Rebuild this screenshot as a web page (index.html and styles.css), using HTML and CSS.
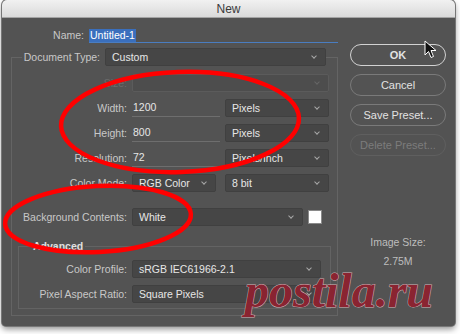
FILE: index.html
```html
<!DOCTYPE html>
<html lang="en">
<head>
<meta charset="UTF-8" />
<title>New</title>
<link rel="stylesheet" href="styles.css">
</head>
<body>
  <div class="window">
    <div class="titlebar">New</div>
    <div class="content">
      <div class="main">
        <div class="name-row">
          <span class="lbl name-lbl">Name:</span>
          <div class="name-field"><span class="selected">Untitled-1</span></div>
        </div>

        <fieldset class="group">
          <legend class="row doc-row">
            <span class="lbl doc-lbl">Document Type:</span>
            <div class="select doc-select">Custom</div>
          </legend>

          <div class="row">
            <span class="lbl off">Size:</span>
            <div class="select disabled size-select"></div>
          </div>
          <div class="row">
            <span class="lbl">Width:</span>
            <div class="textfield">1200</div>
            <div class="select unit">Pixels</div>
          </div>
          <div class="row">
            <span class="lbl">Height:</span>
            <div class="textfield">800</div>
            <div class="select unit">Pixels</div>
          </div>
          <div class="row">
            <span class="lbl">Resolution:</span>
            <div class="textfield">72</div>
            <div class="select unit">Pixels/Inch</div>
          </div>
          <div class="row">
            <span class="lbl">Color Mode:</span>
            <div class="select mode">RGB Color</div>
            <div class="select unit bits">8 bit</div>
          </div>
          <div class="row bg-row">
            <span class="lbl">Background Contents:</span>
            <div class="select bg-select">White</div>
            <div class="swatch"></div>
          </div>

          <fieldset class="advanced">
            <legend>Advanced</legend>
            <div class="row">
              <span class="lbl adv-lbl">Color Profile:</span>
              <div class="select adv-select">sRGB IEC61966-2.1</div>
            </div>
            <div class="row">
              <span class="lbl adv-lbl">Pixel Aspect Ratio:</span>
              <div class="select adv-select">Square Pixels</div>
            </div>
          </fieldset>
        </fieldset>
      </div>

      <div class="side">
        <div class="btn primary">OK</div>
        <div class="btn">Cancel</div>
        <div class="btn">Save Preset...</div>
        <div class="btn dim">Delete Preset...</div>
        <div class="image-size">
          <div class="is-label">Image Size:</div>
          <div class="is-value">2.75M</div>
        </div>
      </div>
    </div>
  </div>

  <!-- marcas rojas y marca de agua encima del dialogo -->
  <svg class="marks" width="460" height="334" viewBox="0 0 460 334">
    <ellipse cx="180" cy="122" rx="119" ry="50" transform="rotate(-2 180 122)" />
    <ellipse cx="98" cy="219" rx="93" ry="33" transform="rotate(-3 98 219)" />
  </svg>
  <div class="watermark">postila.ru</div>
  <svg class="cursor" width="14" height="20" viewBox="0 0 14 20">
    <path d="M1 1 L1 15 L4.5 11.5 L7 17.5 L9.5 16.5 L7 10.5 L12 10.5 Z" />
  </svg>
</body>
</html>
```

FILE: styles.css
```css
body {
  margin: 0;
  width: 460px;
  height: 334px;
  background: #fff;
  position: relative;
  overflow: hidden;
  font-family: "Liberation Sans", Arial, sans-serif;
  font-size: 10.5px;
}

.window {
  margin-left: 2px;
  width: 453px;
  height: 326px;
  background: #535353;
  border-radius: 5px 5px 4px 4px;
  box-shadow: 0 0 0 1px #777, 0 3px 6px rgba(0,0,0,0.45);
  overflow: hidden;
}

.titlebar {
  height: 18px;
  line-height: 18px;
  text-align: center;
  font-size: 12px;
  color: #3a3a3a;
  background: linear-gradient(#f1f1f1, #dadada);
  border-bottom: 1px solid #a4a4a4;
  box-sizing: border-box;
}

.content {
  display: flex;
}

.main {
  width: 338px;
  padding-top: 11px;
}

/* fila de nombre */
.name-row {
  display: flex;
  gap: 5px;
  margin-left: 9px;
  height: 14px;
  line-height: 13px;
}
.name-lbl {
  width: 73px;
}
.name-field {
  width: 249px;
  border-bottom: 1px solid #4a7dc0;
  box-sizing: border-box;
}
.selected {
  display: inline-block;
  background: #3a6fbd;
  color: #fff;
  padding: 0 1px;
  height: 13px;
}

.lbl {
  color: #c8c8c8;
  text-align: right;
  flex: none;
}
.lbl.off {
  color: #6c6c6c;
}

/* grupo principal */
fieldset {
  margin: 0;
  min-width: 0;
  box-sizing: border-box;
}
.group {
  margin: 5px 0 0 9px;
  width: 327px;
  padding: 8px 0 6px 0;
  border: 1px solid #646464;
}
.row {
  display: flex;
  align-items: center;
  gap: 5px;
  height: 18px;
  line-height: 18px;
  margin-bottom: 7px;
}
.row .lbl {
  width: 115px;
}
.doc-row {
  margin: 0 0 0 10px;
  padding: 0;
}
.row .doc-lbl {
  width: 78px;
}

.select {
  position: relative;
  height: 18px;
  box-sizing: border-box;
  background: #464646;
  border: 1px solid #404040;
  border-radius: 2px;
  color: #e6e6e6;
  padding-left: 6px;
  line-height: 16px;
}
.select::after {
  content: "";
  position: absolute;
  right: 9px;
  top: 5px;
  width: 3px;
  height: 3px;
  border-right: 1px solid #a8a8a8;
  border-bottom: 1px solid #a8a8a8;
  transform: rotate(45deg);
}
.select.disabled {
  background: #4d4d4d;
  border-color: #5b5b5b;
}
.select.disabled::after {
  border-color: #666;
}

.doc-select { width: 221px; }
.size-select { width: 197px; }
.unit { width: 104px; }
.mode { width: 84px; }
.bits { margin-left: 4px; }
.bg-select { width: 171px; }

.textfield {
  width: 88px;
  height: 18px;
  box-sizing: border-box;
  border-bottom: 1px solid #6e6e6e;
  color: #e6e6e6;
  padding-left: 1px;
  line-height: 17px;
}

.bg-row {
  margin-top: 16px;
  margin-bottom: 0;
}
.swatch {
  width: 14px;
  height: 14px;
  box-sizing: border-box;
  background: #fff;
  border: 1px solid #8a8a8a;
}

/* bloque avanzado */
.advanced {
  margin: 14px 0 0 6px;
  width: 313px;
  padding: 8px 0 0 0;
  border: 1px solid #636363;
}
.advanced legend {
  margin-left: 12px;
  padding: 0 2px;
  color: #e0e0e0;
  font-weight: bold;
  line-height: 12px;
}
.row .adv-lbl {
  width: 108px;
}
.adv-select { width: 189px; }
.advanced .row:last-child {
  margin-bottom: 5px;
}

/* columna derecha */
.side {
  padding: 26px 0 0 10px;
  width: 96px;
}
.btn {
  height: 22px;
  line-height: 20px;
  box-sizing: border-box;
  border: 1px solid #7a7a7a;
  border-radius: 11px;
  text-align: center;
  color: #e2e2e2;
  font-size: 11px;
  margin-bottom: 8px;
}
.btn.primary {
  border-color: #d2d2d2;
  font-weight: bold;
}
.btn.dim {
  border-color: #5f5f5f;
  color: #7c7c7c;
}
.image-size {
  margin-top: 80px;
  text-align: center;
  color: #bdbdbd;
  line-height: 12px;
}
.is-value {
  margin-top: 8px;
  line-height: 11px;
}

/* capas encima */
.marks {
  position: absolute;
  left: 0;
  top: 0;
}
.marks ellipse {
  fill: none;
  stroke: #f00;
  stroke-width: 4.5;
}
.watermark {
  position: absolute;
  left: 245px;
  top: 271px;
  font-family: "Liberation Serif", "Times New Roman", serif;
  font-weight: bold;
  font-style: italic;
  font-size: 48px;
  line-height: 40px;
  color: #8d2230;
  -webkit-text-stroke: 1px #d8b6ba;
  paint-order: stroke fill;
  opacity: 0.95;
}
.cursor {
  position: absolute;
  left: 424px;
  top: 40px;
}
.cursor path {
  fill: #111;
  stroke: #fff;
  stroke-width: 1;
}
```
